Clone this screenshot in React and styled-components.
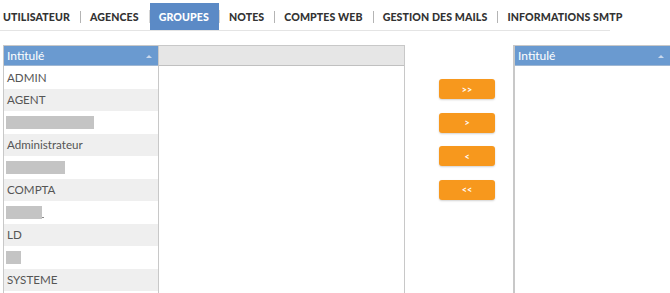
import styled, { createGlobalStyle } from "styled-components"

const GlobalStyle = createGlobalStyle`
    html, body {
        margin: 0;
        padding: 0;
        background: #fff;
        overflow: hidden;
    }
    body {
        font-family: Lato, "Liberation Sans", sans-serif;
    }
`;

const tabs = ["UTILISATEUR", "AGENCES", "GROUPES", "NOTES", "COMPTES WEB", "GESTION DES MAILS", "INFORMATIONS SMTP"];

const rows = [
    { label: "ADMIN" },
    { label: "AGENT" },
    { blur: 88 },
    { label: "Administrateur" },
    { blur: 59 },
    { label: "COMPTA" },
    { blur: 36, tail: true },
    { label: "LD" },
    { blur: 15 },
    { label: "SYSTEME" },
];

const moves = [">>", ">", "<", "<<"];

export default function App(){
    return(
        <>
            <GlobalStyle />
            <Page>
                <TabBar>
                    {tabs.map((t, i) => (
                        <TabItem key={t}>
                            {i > 0 && <Sep $faint={t === "GROUPES" || tabs[i - 1] === "GROUPES"} />}
                            <Tab $active={t === "GROUPES"} $first={i === 0}>{t}</Tab>
                        </TabItem>
                    ))}
                </TabBar>
                <Content>
                    <ListTable>
                        <HeadRow>
                            <HeadCell $w={154}>Intitulé<SortArrow /></HeadCell>
                            <EmptyHead />
                        </HeadRow>
                        <Body>
                            <NameCol>
                                {rows.map((r, i) => (
                                    <Row key={i} $odd={i % 2 === 1}>
                                        {r.label ? r.label : <Redacted style={{ width: r.blur }} />}
                                        {r.tail && <Tail />}
                                    </Row>
                                ))}
                            </NameCol>
                            <EmptyCol />
                        </Body>
                    </ListTable>
                    <Buttons>
                        {moves.map(m => <MoveButton key={m}>{m}</MoveButton>)}
                    </Buttons>
                    <SideTable>
                        <HeadCell $w={155}>Intitulé<SortArrow /></HeadCell>
                        <SideBody />
                    </SideTable>
                </Content>
            </Page>
        </>
    );
}

const Page = styled.div`
    width: 670px;
    height: 293px;
    overflow: hidden;
`;

const TabBar = styled.div`
    display: flex;
    align-items: stretch;
    width: 610px;
    height: 27px;
    margin-top: 3px;
    border-bottom: 1px solid #e4e4e4;
    white-space: nowrap;
`;

const TabItem = styled.div`
    display: flex;
    align-items: center;
`;

const Sep = styled.span`
    width: 1px;
    height: ${p => p.$faint ? "13px" : "12px"};
    background: ${p => p.$faint ? "#d6d6d6" : "#b4b4b4"};
`;

const Tab = styled.div`
    display: flex;
    align-items: center;
    height: 27px;
    padding: 0 10px 0 ${p => p.$first ? "3px" : "9px"};
    font-size: 10.6px;
    font-weight: 900;
    letter-spacing: 0.1px;
    color: ${p => p.$active ? "#fff" : "#333"};
    background: ${p => p.$active ? "#5b8ac6" : "transparent"};
`;

const Content = styled.div`
    display: flex;
    align-items: flex-start;
    margin-top: 14px;
`;

const ListTable = styled.div`
    width: 400px;
    margin-left: 3px;
    border: 1px solid #c8c8c8;
    border-bottom: none;
    display: flex;
    flex-direction: column;
`;

const HeadRow = styled.div`
    display: flex;
    height: 20px;
`;

const HeadCell = styled.div`
    position: relative;
    width: ${p => p.$w}px;
    height: 20px;
    box-sizing: border-box;
    padding-left: 3px;
    display: flex;
    align-items: center;
    background: #6a9ad0;
    color: #fff;
    font-size: 12px;
    border-bottom: 1px solid #9fb7d3;
`;

const SortArrow = styled.span`
    position: absolute;
    right: 6px;
    top: 9px;
    width: 0;
    height: 0;
    border-left: 3px solid transparent;
    border-right: 3px solid transparent;
    border-bottom: 3px solid #c9d8ec;
`;

const EmptyHead = styled.div`
    flex: 1;
    background: #e6e6e6;
    border-left: 1px solid #c8c8c8;
    border-bottom: 1px solid #c0c0c0;
`;

const Body = styled.div`
    display: flex;
    height: 230px;
`;

const NameCol = styled.div`
    width: 154px;
`;

const Row = styled.div`
    height: 22.5px;
    display: flex;
    align-items: center;
    padding-left: 3px;
    font-size: 11.6px;
    color: #555;
    background: ${p => p.$odd ? "#efefef" : "#fff"};
`;

const Redacted = styled.span`
    display: block;
    height: 13px;
    margin-left: -1px;
    background: #c4c4c4;
`;

const Tail = styled.span`
    display: block;
    width: 2px;
    height: 1px;
    margin-top: 11px;
    background: #888;
`;

const EmptyCol = styled.div`
    flex: 1;
    border-left: 1px solid #c8c8c8;
`;

const Buttons = styled.div`
    display: flex;
    flex-direction: column;
    gap: 13.5px;
    margin: 34px 0 0 34px;
`;

const MoveButton = styled.button`
    width: 56px;
    height: 20px;
    border: none;
    border-radius: 3px;
    background: #f7981d;
    color: #fff;
    font-family: Lato, "Liberation Sans", sans-serif;
    font-size: 9px;
    font-weight: 700;
    padding: 0;
    box-shadow: 0 1px 2px rgba(0, 0, 0, 0.18);
`;

const SideTable = styled.div`
    margin-left: 18px;
    flex: 1;
    border-top: 1px solid #c8c8c8;
    border-left: 2px solid #c8c8c8;
`;

const SideBody = styled.div`
    height: 230px;
`;
